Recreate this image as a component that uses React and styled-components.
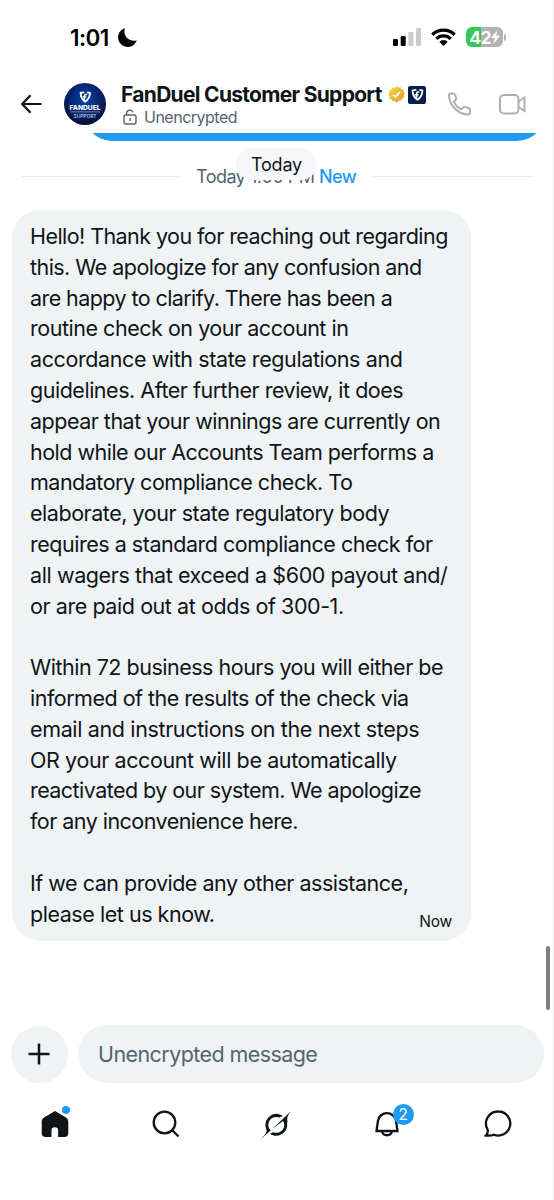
import React from "react";
import styled, { createGlobalStyle, css } from "styled-components";

const GlobalStyle = createGlobalStyle`
  * {
    box-sizing: border-box;
  }
  body {
    margin: 0;
    background: #fff;
    font-family: Inter, "Liberation Sans", sans-serif;
    color: #0f1419;
  }
  svg {
    display: block;
    flex: none;
  }
`;

const Screen = styled.div`
  display: flex;
  flex-direction: column;
  width: 554px;
  height: 1200px;
  overflow: hidden;
  background: #fff;
  border-right: 1px solid #ececee;
`;

const StatusBar = styled.div`
  display: flex;
  align-items: center;
  height: 74px;
  padding: 0 47px 0 70px;
`;

const Clock = styled.span`
  width: 43px;
  margin-right: 5px;
  font-size: 22.5px;
  font-weight: 600;
  letter-spacing: -0.6px;
  color: #000;
  white-space: nowrap;
`;

const StatusIcons = styled.div`
  display: flex;
  align-items: center;
  gap: 10px;
  margin-left: auto;
`;

const Battery = styled.div`
  display: flex;
  align-items: center;
  gap: 1px;
`;

const BatteryBody = styled.div`
  display: flex;
  align-items: center;
  justify-content: center;
  width: 37px;
  height: 20px;
  border-radius: 6px;
  background: linear-gradient(90deg, #34c759 15.5px, #b3b3b3 15.5px);
  color: #fff;
  font-size: 17.5px;
  font-weight: 700;
  letter-spacing: -0.6px;
`;

const BatteryTip = styled.div`
  width: 2px;
  height: 7px;
  border-radius: 0 2px 2px 0;
  background: #b3b3b3;
`;

const Header = styled.header`
  display: flex;
  height: 59px;
  padding: 9px 27px 0 20px;
`;

const BackButton = styled.div`
  width: 44px;
  padding-top: 11px;
`;

const Contact = styled.div`
  flex: 1;
  margin-left: 15px;
`;

const NameRow = styled.div`
  display: flex;
  align-items: center;
  height: 23px;
`;

const Name = styled.span`
  width: 263px;
  margin-right: 4px;
  font-size: 21px;
  font-weight: 700;
  letter-spacing: -0.7px;
  white-space: nowrap;
`;

const Encryption = styled.div`
  display: flex;
  align-items: center;
  gap: 7px;
  height: 21px;
  padding-left: 2px;
  color: #536471;
  font-size: 16px;
  letter-spacing: -0.5px;
`;

const Calls = styled.div`
  display: flex;
  gap: 27px;
  padding-top: 9px;
`;

const Chat = styled.main`
  flex: 1;
  display: flex;
  flex-direction: column;
  position: relative;
`;

const SentBubble = styled.div`
  height: 8px;
  margin: 0 8px 0 84px;
  overflow: hidden;
  display: flex;
  align-items: flex-end;

  &::before {
    content: "";
    flex: 1;
    height: 60px;
    border-radius: 28px;
    background: #1d9bf0;
  }
`;

const Divider = styled.div`
  display: flex;
  align-items: center;
  height: 30px;
  margin: 20px 21px 0 22px;
  font-size: 18px;
  color: #536471;
  white-space: nowrap;

  &::before,
  &::after {
    content: "";
    flex: 1;
    height: 1px;
    background: #e8ebed;
  }
`;

const DividerText = styled.span`
  width: 118px;
  margin-left: 15px;
  letter-spacing: -0.5px;
`;

const NewLabel = styled.span`
  width: 38px;
  margin: 0 16px 0 5px;
  color: #1d9bf0;
  font-weight: 500;
  letter-spacing: -0.6px;
`;

const DatePill = styled.div`
  position: absolute;
  top: 15px;
  left: 236px;
  display: flex;
  align-items: center;
  justify-content: center;
  width: 81px;
  height: 32px;
  border-radius: 16px;
  background: #f7f7f9;
  font-size: 18px;
  letter-spacing: -0.2px;
`;

const Bubble = styled.div`
  width: 459px;
  height: 731px;
  margin: 19px 0 0 12px;
  padding: 11px 18px 0;
  border-radius: 28px;
  background: #eff3f4;
  position: relative;
`;

const Paragraph = styled.p`
  margin: 0 0 30.8px;
  font-size: 21.5px;
  line-height: 30.8px;
`;

const Line = styled.span`
  display: block;
  white-space: nowrap;
  letter-spacing: ${(p) => p.$spacing}px;
`;

const SentAt = styled.span`
  position: absolute;
  right: 19px;
  bottom: 10px;
  font-size: 15.5px;
  letter-spacing: -0.2px;
`;

const ScrollThumb = styled.div`
  position: absolute;
  top: 813px;
  right: 3px;
  width: 4px;
  height: 64px;
  border-radius: 2px;
  background: #7f7f7f;
`;

const Composer = styled.div`
  display: flex;
  align-items: flex-end;
  gap: 10px;
  height: 58px;
  padding: 0 9px 0 10.5px;
`;

const fill = css`
  background: #eff3f4;
`;

const AddButton = styled.div`
  ${fill}
  display: flex;
  align-items: center;
  justify-content: center;
  width: 57px;
  height: 57px;
  border-radius: 50%;
`;

const MessageInput = styled.div`
  ${fill}
  flex: 1;
  height: 58px;
  padding-left: 20.5px;
  border-radius: 29px;
  color: #536471;
  font-size: 21.5px;
  line-height: 59px;
  letter-spacing: -0.58px;
`;

const TabBar = styled.nav`
  display: grid;
  grid-template-columns: repeat(5, 110.6px);
  height: 117.5px;
  padding-top: 27px;
`;

const Tab = styled.div`
  position: relative;
  display: flex;
  justify-content: center;
  align-items: flex-start;
`;

const UnreadDot = styled.span`
  position: absolute;
  top: -4px;
  left: 62px;
  width: 8px;
  height: 8px;
  border-radius: 50%;
  background: #1d9bf0;
`;

const Badge = styled.span`
  position: absolute;
  top: -6px;
  left: 61px;
  width: 21px;
  height: 21px;
  border-radius: 50%;
  background: #1d9bf0;
  color: #fff;
  font-size: 15.5px;
  line-height: 21px;
  text-align: center;
`;

const message = [
  [
    ["Hello! Thank you for reaching out regarding", -0.56],
    ["this. We apologize for any confusion and", -0.55],
    ["are happy to clarify. There has been a", -0.58],
    ["routine check on your account in", -0.47],
    ["accordance with state regulations and", -0.4],
    ["guidelines. After further review, it does", -0.48],
    ["appear that your winnings are currently on", -0.5],
    ["hold while our Accounts Team performs a", -0.52],
    ["mandatory compliance check. To", -0.5],
    ["elaborate, your state regulatory body", -0.46],
    ["requires a standard compliance check for", -0.48],
    ["all wagers that exceed a $600 payout and/", -0.4],
    ["or are paid out at odds of 300-1.", -0.43],
  ],
  [
    ["Within 72 business hours you will either be", -0.49],
    ["informed of the results of the check via", -0.5],
    ["email and instructions on the next steps", -0.36],
    ["OR your account will be automatically", -0.4],
    ["reactivated by our system. We apologize", -0.56],
    ["for any inconvenience here.", -0.53],
  ],
  [
    ["If we can provide any other assistance,", -0.49],
    ["please let us know.", -0.46],
  ],
];

const Shield = ({ x, y, size }) => (
  <svg x={x} y={y} width={size} height={size} viewBox="0 0 24 24">
    <g fill="none" stroke="#fff" strokeWidth="3.4">
      <path d="M10 3.500 3 4.500C3 12.500 5.500 17.500 12 21.500c6.500-4 9-9 9-17L15.500 3.500" />
      <path d="M15.500 7.500h-2.500q-2.500 0-2.500 2.500v8M7 12.300h7" strokeWidth="2.800" />
    </g>
  </svg>
);

const Avatar = () => (
  <svg width="42" height="42" viewBox="0 0 42 42">
    <defs>
      <radialGradient id="avatar" cx="50%" cy="38%" r="60%">
        <stop offset="0" stopColor="#0c45b0" />
        <stop offset="0.5" stopColor="#06297a" />
        <stop offset="1" stopColor="#020f3a" />
      </radialGradient>
    </defs>
    <circle cx="21" cy="21" r="21" fill="url(#avatar)" />
    <Shield x={15} y={7.5} size={12.5} />
    <text
      x="21"
      y="27.4"
      textAnchor="middle"
      fontSize="6.4"
      fontWeight="800"
      fill="#fff"
      textLength="31"
      lengthAdjust="spacingAndGlyphs"
    >
      FANDUEL
    </text>
    <path d="M6 28.900h30" stroke="#b9c6e8" strokeWidth="0.600" />
    <text
      x="21"
      y="34.5"
      textAnchor="middle"
      fontSize="5.4"
      fill="#dfe6f7"
      textLength="23"
      lengthAdjust="spacingAndGlyphs"
    >
      SUPPORT
    </text>
  </svg>
);

const GoldCheck = () => (
  <svg width="17" height="17" viewBox="-0.5 0 23 22">
    <defs>
      <linearGradient id="gold" x1="0" y1="0" x2="1" y2="1">
        <stop offset="0" stopColor="#f6d750" />
        <stop offset="1" stopColor="#d9a31f" />
      </linearGradient>
    </defs>
    <path
      d="m11 0 2.400 2 3-1 1.200 2.900 3.100.5-.2 3.200L22.500 10l-1.800 2.600.5 3.100-3 1-1.200 2.900-3.200-.3L11 22l-2.600-2.200-3.200.3L4 17.200l-3-1 .5-3.100L-.5 10.500 1.600 8l-.3-3.200 3.100-.6L5.600 1.300l3 .9z"
      fill="url(#gold)"
    />
    <path d="m6.500 11.300 3 3 6-6.500" fill="none" stroke="#fff" strokeWidth="2.200" />
  </svg>
);

const AffiliateBadge = styled.div`
  display: flex;
  align-items: center;
  justify-content: center;
  width: 18px;
  height: 18px;
  margin-left: 3px;
  border-radius: 2px;
  background: #071d4b;
`;

const App = () => {
  return (
    <>
      <GlobalStyle />
      <Screen>
        <StatusBar>
          <Clock>1:01</Clock>
          <svg width="19" height="19" viewBox="0 0 19 19">
            <path d="M6.800.2A9.600 9.600 0 1 0 18.800 12.300C13 14.500 4.500 10 6.800.2z" />
          </svg>
          <StatusIcons>
            <svg width="28" height="18" viewBox="0 0 28 18">
              <rect y="11" width="5" height="7" rx="1.300" />
              <rect x="7.700" y="8" width="5" height="10" rx="1.300" />
              <rect x="15.400" y="4" width="5" height="14" rx="1.300" fill="#ccc" />
              <rect x="23" width="5" height="18" rx="1.300" fill="#ccc" />
            </svg>
            <svg width="25" height="18" viewBox="0 0 25 18">
              <g fill="none" stroke="#000" strokeWidth="3.300">
                <path d="M1.300 6.700a16 16 0 0 1 22.400 0" />
                <path d="M5.300 10.900a10.200 10.200 0 0 1 14.400 0" />
              </g>
              <path d="M8.300 13.700a6.200 6.200 0 0 1 8.400 0L12.500 18z" />
            </svg>
            <Battery>
              <BatteryBody>
                42
                <svg width="9" height="14" viewBox="0 0 9 14">
                  <path d="M6.500 0 0 8h3.600L2.300 14 9 5.800H5.300z" fill="#fff" />
                </svg>
              </BatteryBody>
              <BatteryTip />
            </Battery>
          </StatusIcons>
        </StatusBar>

        <Header>
          <BackButton>
            <svg width="22" height="20" viewBox="0 0 22 20">
              <path
                d="M21.500 10H2.500M10.500 1.200 2.200 10l8.300 8.800"
                fill="none"
                stroke="#0f1419"
                strokeWidth="2.200"
              />
            </svg>
          </BackButton>
          <Avatar />
          <Contact>
            <NameRow>
              <Name>FanDuel Customer Support</Name>
              <GoldCheck />
              <AffiliateBadge>
                <Shield size={13} />
              </AffiliateBadge>
            </NameRow>
            <Encryption>
              <svg width="14" height="16" viewBox="0 0 14 16">
                <g fill="none" stroke="#536471" strokeWidth="1.400">
                  <rect x="1" y="6" width="12" height="9" rx="2" />
                  <path d="M3.500 6V4.500a3.400 3.400 0 0 1 6.500-1.300M7 9v3" />
                </g>
              </svg>
              Unencrypted
            </Encryption>
          </Contact>
          <Calls>
            <svg width="24" height="24" viewBox="0 0 24 24">
              <path
                d="M3.500 1.500h3.200q1 0 1.300 1l1.200 3.600q.3 1-.5 1.800L7 9.800c1.500 3.500 4 6 7.500 7.400l1.800-1.800q.8-.8 1.800-.5l3.800 1.300q1.100.3 1.100 1.400v3.200q0 1.700-1.700 1.700C11 22.500 2 13 2 3.200q0-1.700 1.500-1.700z"
                fill="none"
                stroke="#adb0b3"
                strokeWidth="2"
              />
            </svg>
            <svg width="28" height="24" viewBox="0 0 28 24">
              <g fill="none" stroke="#adb0b3" strokeWidth="2">
                <rect x="2" y="3" width="18.500" height="18.500" rx="4" />
                <path d="m20.500 9.500 6-4v13.500l-6-4" />
              </g>
            </svg>
          </Calls>
        </Header>

        <Chat>
          <SentBubble />
          <Divider>
            <DividerText>Today 1:00 PM</DividerText>
            <NewLabel>New</NewLabel>
          </Divider>
          <DatePill>Today</DatePill>
          <Bubble>
            {message.map((lines, i) => (
              <Paragraph key={i}>
                {lines.map(([text, spacing]) => (
                  <Line key={text} $spacing={spacing}>
                    {text}
                  </Line>
                ))}
              </Paragraph>
            ))}
            <SentAt>Now</SentAt>
          </Bubble>
          <ScrollThumb />
        </Chat>

        <Composer>
          <AddButton>
            <svg width="22" height="22" viewBox="0 0 22 22">
              <path d="M11 .5v21M.5 11h21" stroke="#0f1419" strokeWidth="2.500" />
            </svg>
          </AddButton>
          <MessageInput>Unencrypted message</MessageInput>
        </Composer>

        <TabBar>
          <Tab>
            <svg width="28" height="28" viewBox="0 0 28 28">
              <path
                d="M14 1 3 7.500Q.7 8.900.7 11.500V23q0 4 4 4H10.500v-6.500a3.300 3.300 0 0 1 6.600 0V27h6.200q4 0 4-4V11.500q0-2.600-2.300-4z"
                fill="#0f1419"
              />
            </svg>
            <UnreadDot />
          </Tab>
          <Tab>
            <svg width="28" height="28" viewBox="0 0 28 28">
              <g fill="none" stroke="#0f1419" strokeWidth="2.300">
                <circle cx="12.500" cy="12.500" r="10.800" />
                <path d="m20.300 20.300 6.200 6.200" />
              </g>
            </svg>
          </Tab>
          <Tab>
            <svg width="30" height="30" viewBox="0 0 33 33">
              <path
                d="M12.745 20.540 23.383 12.680c.521-.386 1.267-.235 1.516.362 1.307 3.158.723 6.953-1.880 9.559-2.602 2.605-6.223 3.177-9.532 1.875l-3.615 1.676c5.185 3.548 11.481 2.670 15.416-1.272 3.121-3.125 4.088-7.384 3.184-11.225l.8.009c-1.311-5.642.322-7.896 3.667-12.508.08-.11.159-.219.238-.331l-4.401 4.407v-.014L12.742 20.543M10.548 22.454c-3.721-3.559-3.079-9.066.096-12.243 2.348-2.351 6.194-3.310 9.552-1.900l3.607-1.667a10.420 10.420 0 0 0-2.439-1.333A11.970 11.970 0 0 0 8.361 7.931c-3.375 3.380-4.437 8.577-2.614 13.012 1.361 3.313-.87 5.657-3.118 8.022-.797.838-1.596 1.676-2.240 2.565l10.156-9.083"
                fill="#0f1419"
              />
            </svg>
          </Tab>
          <Tab>
            <svg width="28" height="28" viewBox="0 0 28 28">
              <g fill="none" stroke="#0f1419" strokeWidth="2.300">
                <path d="M5 10.500a9.200 9.200 0 0 1 18 0l1.500 10.500h-21z" />
                <path d="M9 21.500a5.200 5.200 0 0 0 10 0" />
              </g>
            </svg>
            <Badge>2</Badge>
          </Tab>
          <Tab>
            <svg width="28" height="28" viewBox="0 0 28 28">
              <path
                d="M14.500 1.500a12 12 0 1 1-4.500 23.200q-1.800 1-8 .8 2.500-2.500 1.500-6.200A12 12 0 0 1 14.500 1.500z"
                fill="none"
                stroke="#0f1419"
                strokeWidth="2.300"
              />
            </svg>
          </Tab>
        </TabBar>
      </Screen>
    </>
  );
};

export default App;
